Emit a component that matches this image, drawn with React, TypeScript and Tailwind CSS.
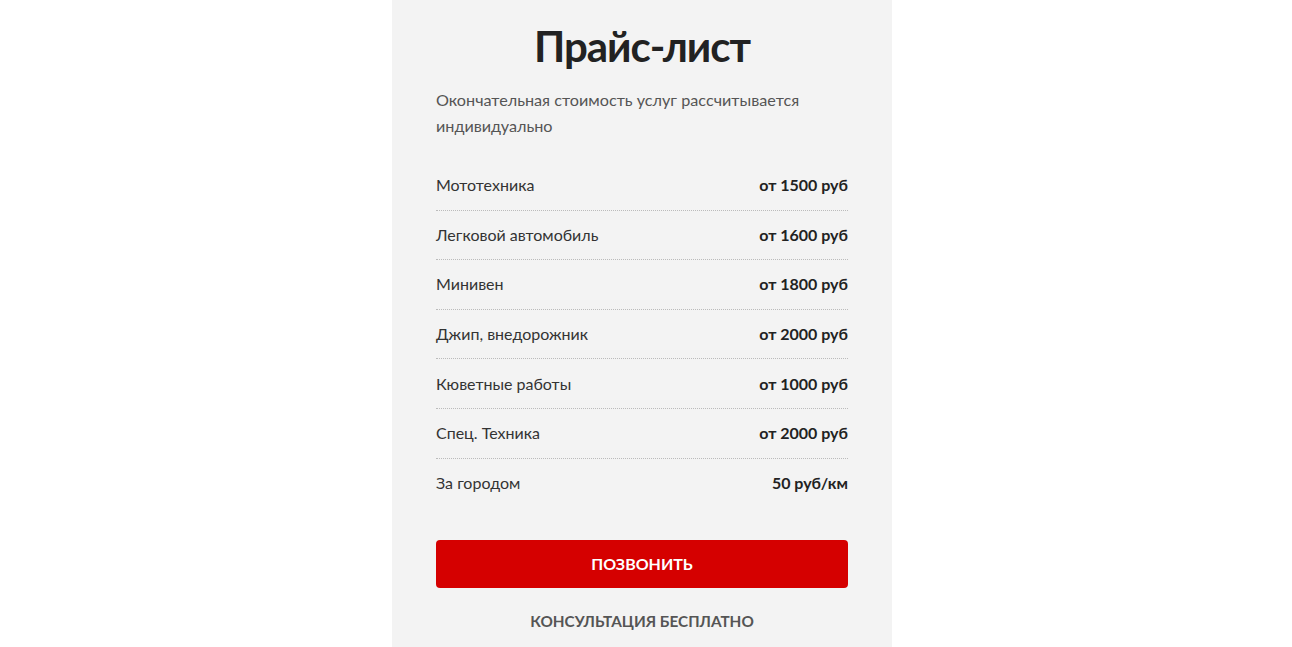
const rows: [string, string][] = [
  ["Мототехника", "от 1500 руб"],
  ["Легковой автомобиль", "от 1600 руб"],
  ["Минивен", "от 1800 руб"],
  ["Джип, внедорожник", "от 2000 руб"],
  ["Кюветные работы", "от 1000 руб"],
  ["Спец. Техника", "от 2000 руб"],
  ["За городом", "50 руб/км"],
];

export default function App() {
  return (
    <div className="min-h-screen bg-white flex justify-center pr-[8px] font-['Lato',sans-serif]">
      <section className="w-[500px] h-[647px] bg-[#f3f3f3] px-[44px] pt-[20px]">
        <h1 className="text-center text-[42px] leading-[52px] font-bold text-[#222] tracking-[-1px]">
          Прайс-лист
        </h1>
        <p className="mt-[15px] text-[16.2px] leading-[26px] text-[#555]">
          Окончательная стоимость услуг рассчитывается индивидуально
        </p>
        <ul className="mt-[22px]">
          {rows.map(([name, price], i) => (
            <li
              key={name}
              className={`flex items-center justify-between h-[49.6px] text-[16px] ${
                i < rows.length - 1 ? "border-b border-dotted border-[#bbb]" : ""
              }`}
            >
              <span className="text-[#333]">{name}</span>
              <span className="font-bold text-[#222]">{price}</span>
            </li>
          ))}
        </ul>
        <button
          type="button"
          className="mt-[32px] w-full h-[48px] rounded-[4px] bg-[#d50000] text-white text-[16px] font-bold uppercase"
        >
          Позвонить
        </button>
        <div className="mt-[22px] text-center text-[15.3px] font-bold text-[#555] uppercase">
          Консультация бесплатно
        </div>
      </section>
    </div>
  );
}
